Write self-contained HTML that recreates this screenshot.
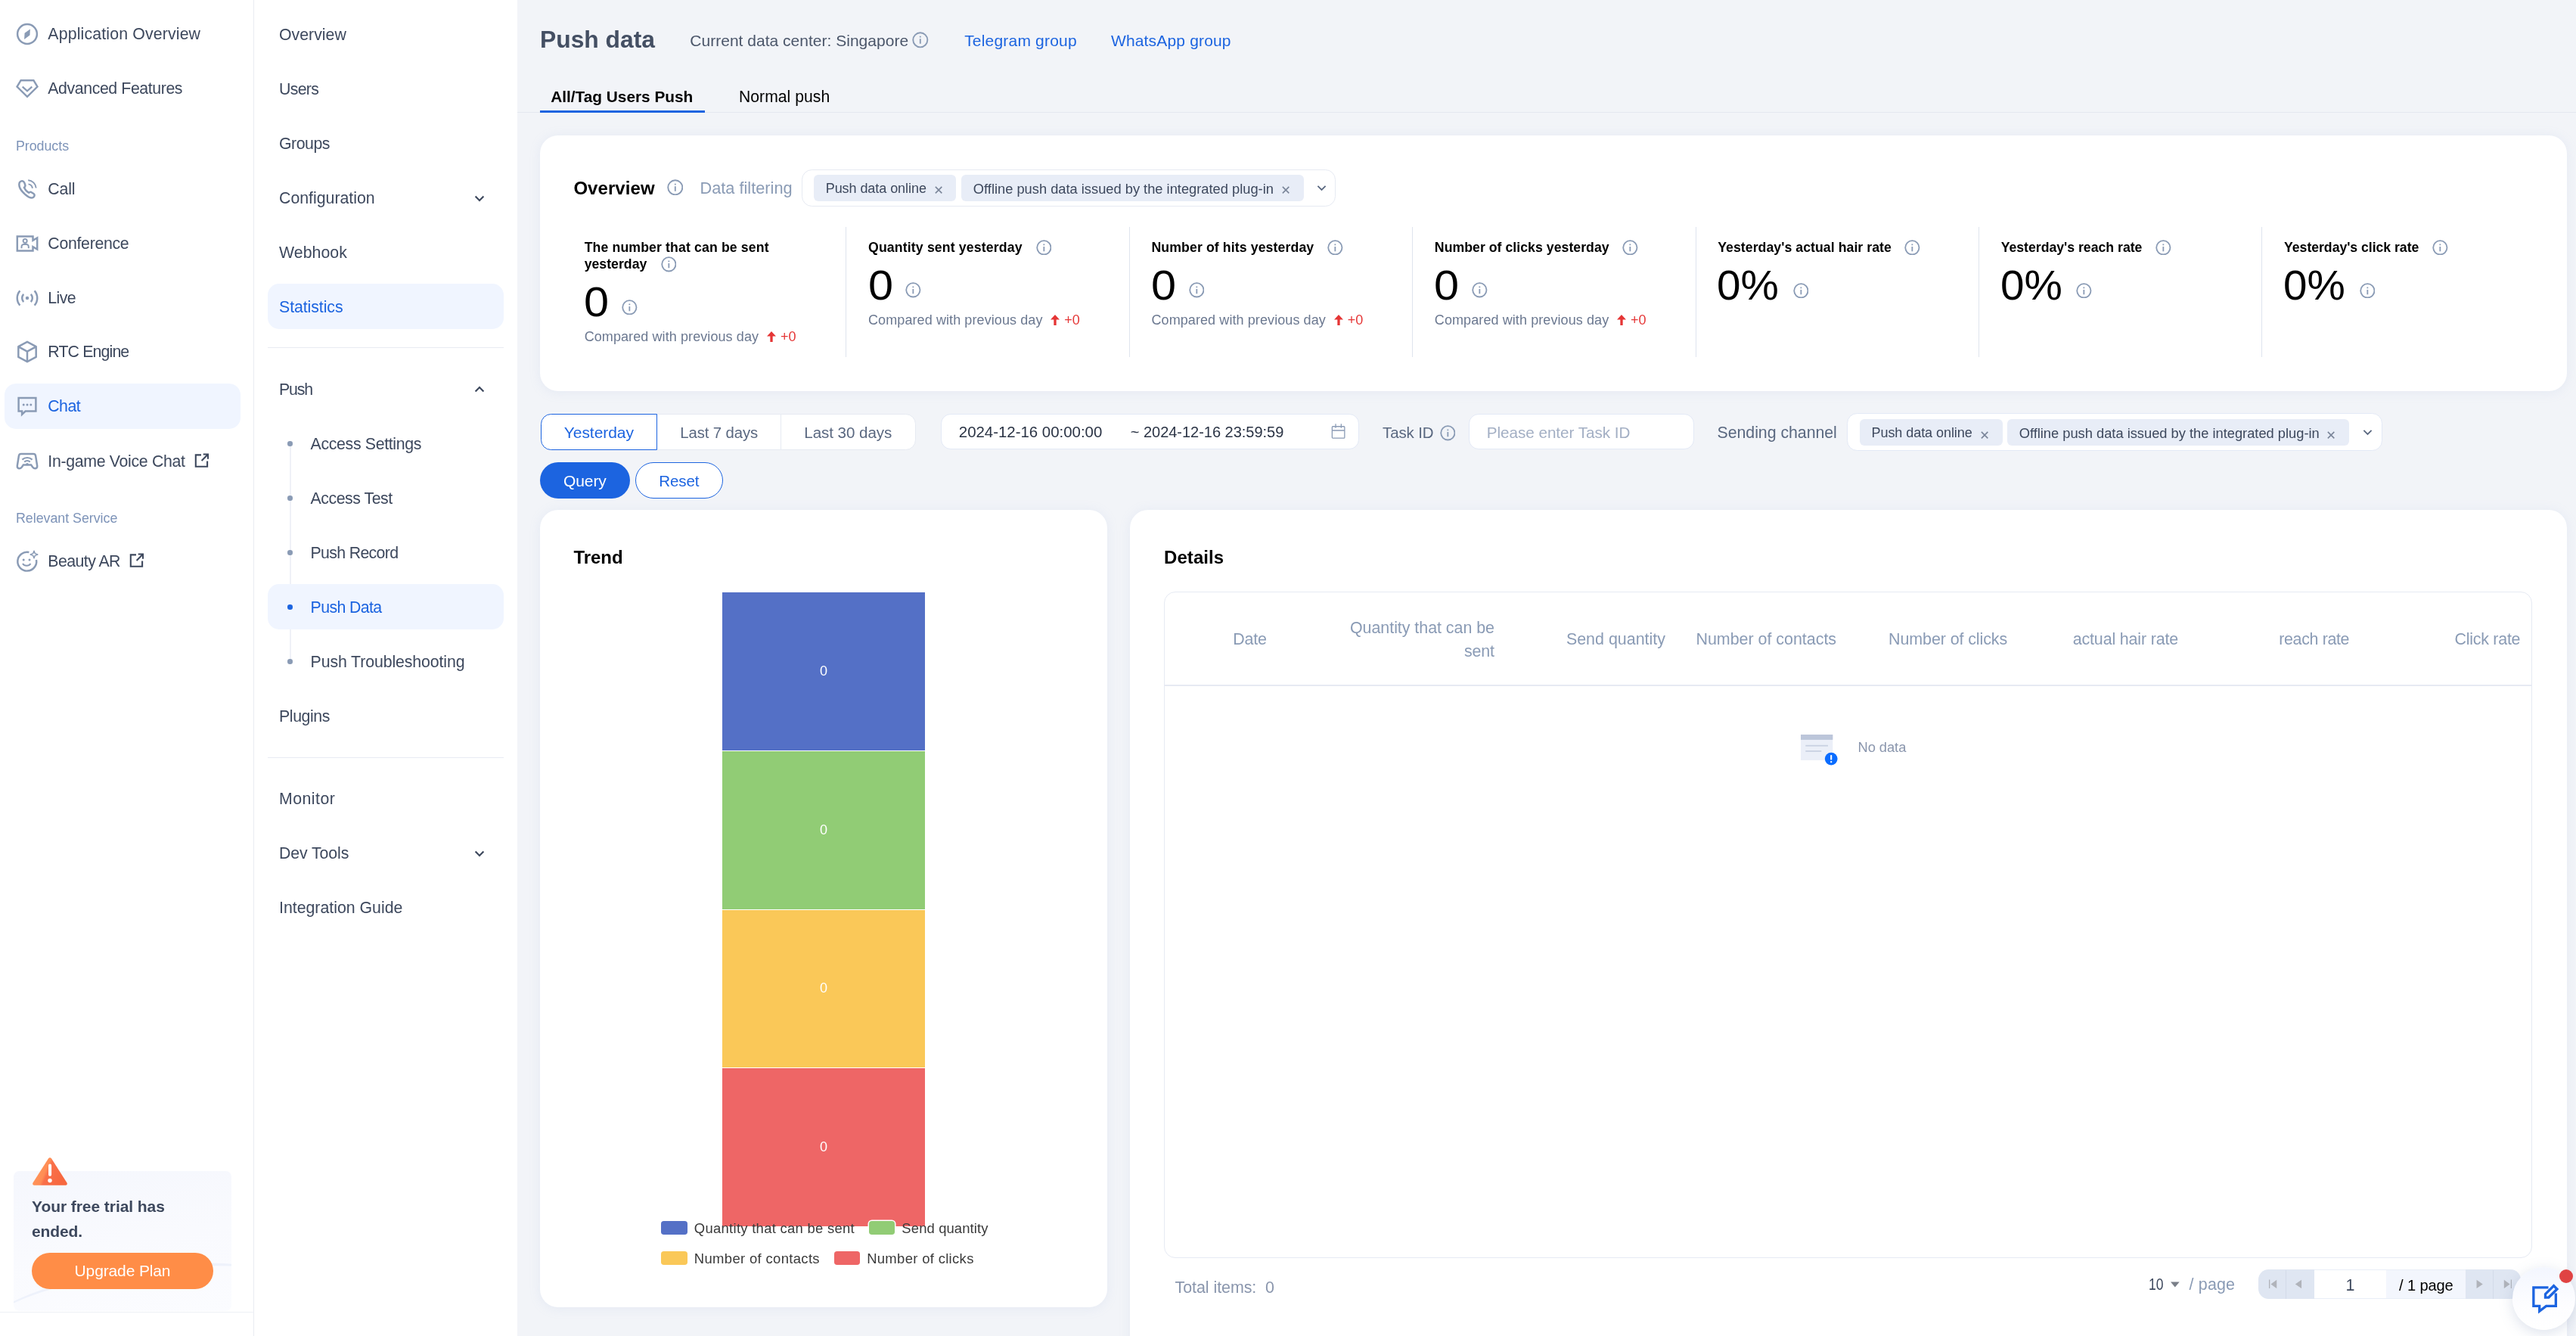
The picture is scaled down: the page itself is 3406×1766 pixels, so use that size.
<!DOCTYPE html>
<html>
<head>
<meta charset="utf-8">
<title>Push data</title>
<style>
*{box-sizing:border-box;margin:0;padding:0}
html,body{width:3406px;height:1766px;overflow:hidden;background:#f2f4f8}
body{font-family:"Liberation Sans",sans-serif;color:#3d485d}
#root{will-change:transform;position:absolute;left:0;top:0;width:2270.67px;height:1177.34px;zoom:1.5;overflow:hidden;background:#f2f4f8;font-size:14px}
.abs{position:absolute}
svg{display:block}
/* sidebar 1 */
#sb1{position:absolute;left:0;top:0;width:224px;height:1177.34px;background:#fff;border-right:1px solid #e9ecf2}
.it{position:absolute;left:4px;width:208px;height:40px;border-radius:10px;line-height:41.2px;padding-left:38.2px;font-size:14.2px;color:#3d485d;white-space:nowrap}
.it svg.ic{position:absolute;left:10px;top:10px;width:20px;height:20px;fill:none;stroke:#8a9bb5;stroke-width:1.65}
.it.on{background:#f0f5ff;color:#1c64e0}
.lab{position:absolute;left:14px;font-size:11.9px;color:#7d93b8;line-height:16px;white-space:nowrap}
.ext{display:inline-block;vertical-align:-1.5px;margin-left:8px;width:13px;height:13px;fill:none;stroke:#3d485d;stroke-width:1.4}
/* sidebar 2 */
#sb2{position:absolute;left:224px;top:0;width:232px;height:1177.34px;background:#fff}
.m{position:absolute;left:12px;width:208px;height:40px;border-radius:10px;line-height:42px;padding-left:10px;font-size:14.2px;color:#3d485d;white-space:nowrap}
.m.on{background:#f0f5ff;color:#1c64e0}
.m.sub{padding-left:37.7px}
.m.sub:before{content:"";position:absolute;left:17.6px;top:18px;width:4.4px;height:4.4px;border-radius:50%;background:#8a9bb5}
.m.sub.on:before{background:#1c64e0}
.m svg.chev{position:absolute;left:180.8px;top:14.5px;width:12px;height:12px;fill:none;stroke:#3d485d;stroke-width:1.45}
.hr{position:absolute;left:12px;width:208px;height:.7px;background:#e8ebf2}
</style>
</head>
<body>
<div id="root">

<!-- ============ SIDEBAR 1 ============ -->
<div id="sb1">
  <div class="it" style="top:10px"><svg class="ic" viewBox="0 0 20 20"><circle cx="10" cy="10" r="8.6"/><path d="M12.6 5.6 L12.3 11 L7.4 14.6 L7.7 9.2 Z" fill="#8a9bb5" stroke="none"/></svg><span style="letter-spacing:0.10px">Application Overview</span></div>
  <div class="it" style="top:58px"><svg class="ic" viewBox="0 0 20 20"><path d="M4.4 2.8 H15.6 L19 8.4 L10 17.2 L1 8.4 Z"/><path d="M5.8 8.4 L10 12.2 L14.2 8.4" stroke-width="1.5"/></svg><span style="letter-spacing:-0.27px">Advanced Features</span></div>
  <div class="lab" style="top:120.5px"><span style="letter-spacing:-0.03px">Products</span></div>
  <div class="it" style="top:146.4px"><svg class="ic" viewBox="0 0 20 20"><path d="M3.2 4.2 C4.6 2.2 6.8 2.6 7.6 4.6 L8.2 6.4 C8.5 7.4 8.1 8 7.3 8.6 C8 10.4 9.4 12 11.4 13.2 C12.2 12.4 13 12.2 13.8 12.8 L15.6 14 C16.8 14.8 16.6 16.2 15.4 17.2 C13.8 18.4 11.4 17.4 8.8 15.2 C5 12 2 7.6 3.2 4.2 Z"/><path d="M11 5.6 A4.2 4.2 0 0 1 14.6 9.2" stroke-width="1.3"/><path d="M10.8 2.2 A7.4 7.4 0 0 1 17.8 9" stroke-width="1.3"/></svg><span style="letter-spacing:-0.11px">Call</span></div>
  <div class="it" style="top:194.4px"><svg class="ic" viewBox="0 0 20 20"><path d="M1.2 3.6 H15 V7.2 L18.8 5 V15 L15 12.8 V16.4 H1.2 Z"/><circle cx="8.1" cy="7.6" r="1.7" stroke-width="1.3"/><path d="M5 14.2 V12.6 C5 11.4 6 10.6 7 10.6 H9.2 C10.2 10.6 11.2 11.4 11.2 12.6 V14.2" stroke-width="1.3"/></svg><span style="letter-spacing:-0.20px">Conference</span></div>
  <div class="it" style="top:242.4px"><svg class="ic" viewBox="0 0 20 20"><circle cx="10" cy="10" r="1.5" fill="#8a9bb5" stroke="none"/><path d="M6.8 6.6 A5 5 0 0 0 6.8 13.4 M13.2 6.6 A5 5 0 0 1 13.2 13.4 M3.6 3.6 A9.6 9.6 0 0 0 3.6 16.4 M16.4 3.6 A9.6 9.6 0 0 1 16.4 16.4"/></svg><span style="letter-spacing:-0.40px">Live</span></div>
  <div class="it" style="top:290px"><svg class="ic" viewBox="0 0 20 20"><path d="M10 1.2 L17.8 5.4 V14.6 L10 18.8 L2.2 14.6 V5.4 Z M2.4 5.6 L10 9.8 L17.6 5.6 M10 9.8 V18.6" stroke-linejoin="round"/></svg><span style="letter-spacing:-0.57px">RTC Engine</span></div>
  <div class="it on" style="top:337.9px"><svg class="ic" viewBox="0 0 20 20"><path d="M2.4 2.6 H17.6 V14.4 H8.4 L5.4 17.2 V14.4 H2.4 Z"/><circle cx="6.8" cy="8.6" r="1" fill="#8a9bb5" stroke="none"/><circle cx="10" cy="8.6" r="1" fill="#8a9bb5" stroke="none"/><circle cx="13.2" cy="8.6" r="1" fill="#8a9bb5" stroke="none"/></svg><span style="letter-spacing:-0.37px">Chat</span></div>
  <div class="it" style="top:386.4px"><svg class="ic" viewBox="0 0 20 20"><path d="M4.6 3.4 H15.4 C16.6 3.4 17.2 4 17.4 5 L18.8 13.8 C19 15.4 18 16.2 17 16.2 C16 16.2 15.4 15.8 14.8 15 L13.4 13 H6.6 L5.2 15 C4.6 15.8 4 16.2 3 16.2 C2 16.2 1 15.4 1.2 13.8 L2.6 5 C2.8 4 3.4 3.4 4.6 3.4 Z"/><path d="M5.6 8.4 A6.4 6.4 0 0 1 14.4 8.4 M7.5 10.4 A3.8 3.8 0 0 1 12.5 10.4" stroke-width="1.45"/><circle cx="10" cy="12.4" r="1.15" fill="#8a9bb5" stroke="none"/></svg><span style="letter-spacing:-0.21px">In-game Voice Chat</span><svg class="ext" viewBox="0 0 13 13"><path d="M6 1.6 H1.2 V11.8 H11.4 V7 M7.8 1 H12 V5.2 M12 1 L6.4 6.6"/></svg></div>
  <div class="lab" style="top:448.8px"><span style="letter-spacing:-0.02px">Relevant Service</span></div>
  <div class="it" style="top:474.4px"><svg class="ic" viewBox="0 0 20 20"><path d="M11.6 2 A8.3 8.3 0 1 0 18 8.6"/><circle cx="6.8" cy="8.6" r="1" fill="#8a9bb5" stroke="none"/><circle cx="12" cy="8.6" r="1" fill="#8a9bb5" stroke="none"/><path d="M6 12 C7.6 14.4 11.4 14.4 13 12" stroke-width="1.4"/><path d="M16 0.8 L16.9 3.1 L19.2 4 L16.9 4.9 L16 7.2 L15.1 4.9 L12.8 4 L15.1 3.1 Z" stroke-width="1" stroke-linejoin="round"/></svg><span style="letter-spacing:-0.37px">Beauty AR</span><svg class="ext" viewBox="0 0 13 13"><path d="M6 1.6 H1.2 V11.8 H11.4 V7 M7.8 1 H12 V5.2 M12 1 L6.4 6.6"/></svg></div>

  <!-- trial card -->
  <div class="abs" style="left:12px;top:1032px;width:192px;height:123.4px;border-radius:5px;background:linear-gradient(170deg,#f5f7fd 0%,#f9fafe 50%,#fbfcff 100%);overflow:hidden">
    <div class="abs" style="left:-20px;top:86px;width:260px;height:60px;border-top:3px solid #eef2fb;border-radius:50%;transform:rotate(-8deg)"></div>
  </div>
  <svg class="abs" style="left:28px;top:1019.6px;width:32px;height:26px" viewBox="0 0 32 26"><defs><linearGradient id="wg" x1="0" y1="0" x2="1" y2=".35"><stop offset="0" stop-color="#ff9c5e"/><stop offset=".48" stop-color="#ff8d55"/><stop offset=".56" stop-color="#f9704a"/><stop offset="1" stop-color="#f7683f"/></linearGradient></defs><path d="M14.6 1.6 C15.3 0.5 16.7 0.5 17.4 1.6 L31 23 C31.6 24 31 25.2 29.8 25.2 H2.2 C1 25.2 0.4 24 1 23 Z" fill="url(#wg)"/><rect x="14.7" y="6.4" width="2.7" height="10.8" rx="1.35" fill="#fff"/><circle cx="16" cy="21" r="1.8" fill="#fff"/></svg>
  <div class="abs" style="left:28px;top:1052.6px;font-size:14px;font-weight:700;line-height:21.8px;color:#3d485d;white-space:nowrap"><span style="letter-spacing:-0.04px">Your free trial has</span><br><span style="letter-spacing:-0.08px">ended.</span></div>
  <div class="abs" style="left:28px;top:1104px;width:160px;height:32px;border-radius:16px;background:#ff8d47;color:#fff;font-size:14px;line-height:32px;text-align:center"><span style="letter-spacing:-0.09px">Upgrade Plan</span></div>
  <div class="abs" style="left:0;top:1155.8px;width:224px;height:1px;background:#edf0f5"></div>
</div>

<!-- ============ SIDEBAR 2 ============ -->
<div id="sb2">
  <div class="m" style="top:10px"><span style="letter-spacing:0.01px">Overview</span></div>
  <div class="m" style="top:58px"><span style="letter-spacing:-0.46px">Users</span></div>
  <div class="m" style="top:106px"><span style="letter-spacing:-0.32px">Groups</span></div>
  <div class="m" style="top:154px"><span style="letter-spacing:-0.00px">Configuration</span><svg class="chev" viewBox="0 0 12 12"><path d="M2.4 4.4 L6 8 L9.6 4.4"/></svg></div>
  <div class="m" style="top:202px"><span style="letter-spacing:0.03px">Webhook</span></div>
  <div class="m on" style="top:250px"><span style="letter-spacing:-0.05px">Statistics</span></div>
  <div class="hr" style="top:306.2px"></div>
  <div class="m" style="top:322.7px"><span style="letter-spacing:-0.74px">Push</span><svg class="chev" viewBox="0 0 12 12"><path d="M2.4 7.6 L6 4 L9.6 7.6"/></svg></div>
  <div class="abs" style="left:31.4px;top:391px;width:1px;height:192px;background:#eff1f7"></div>
  <div class="m sub" style="top:370.9px"><span style="letter-spacing:-0.22px">Access Settings</span></div>
  <div class="m sub" style="top:418.8px"><span style="letter-spacing:-0.31px">Access Test</span></div>
  <div class="m sub" style="top:466.7px"><span style="letter-spacing:-0.44px">Push Record</span></div>
  <div class="m sub on" style="top:514.7px"><span style="letter-spacing:-0.40px">Push Data</span></div>
  <div class="m sub" style="top:562.7px"><span style="letter-spacing:-0.07px">Push Troubleshooting</span></div>
  <div class="m" style="top:610.7px"><span style="letter-spacing:-0.27px">Plugins</span></div>
  <div class="hr" style="top:667px"></div>
  <div class="m" style="top:683.5px"><span style="letter-spacing:0.32px">Monitor</span></div>
  <div class="m" style="top:731.5px"><span style="letter-spacing:-0.06px">Dev Tools</span><svg class="chev" viewBox="0 0 12 12"><path d="M2.4 4.4 L6 8 L9.6 4.4"/></svg></div>
  <div class="m" style="top:779.4px"><span style="letter-spacing:0.00px">Integration Guide</span></div>
</div>

<!-- ============ MAIN ============ -->
<div id="main">
<style>
#main{position:absolute;left:0;top:0;width:2270.67px;height:1177.34px;pointer-events:none}
.t{position:absolute;white-space:nowrap;line-height:20px}
.link{color:#1c64e0}
.info{position:absolute;width:12px;height:12px;fill:none;stroke:#8a9bb5;stroke-width:1.05;margin:-.6px 0 0 -.6px}
.card{position:absolute;background:#fff;border-radius:16px;box-shadow:0 1px 10px rgba(150,170,215,.13)}
.tag{position:absolute;height:23px;border-radius:4px;background:#e8edf7;font-size:12px;line-height:25px;color:#3d485d;padding-left:10.6px;white-space:nowrap}
.tag.r2 svg{top:10.7px}
.tag svg{position:absolute;right:12.4px;top:9.7px;width:6.8px;height:6.8px;stroke:#7a8599;stroke-width:1.1;fill:none}
.sel{position:absolute;height:32px;border-radius:9px;background:#fff;border:1px solid #e6eaf2}
.st{position:absolute;top:200px;width:249.6px;height:114.5px;border-left:1px solid #dfe4ee}
.st.first{border-left:none}
.st .h{position:absolute;left:19.1px;top:10.4px;font-size:11.8px;font-weight:700;line-height:15px;color:#000;white-space:nowrap}
.st .n{position:absolute;left:18.6px;font-size:37px;line-height:40px;color:#000;white-space:nowrap;transform-origin:0 50%}
.st .n.z{transform:scaleX(1.07);left:18.8px}
.st .n.p{transform:scaleX(1.02)}
.st .c{position:absolute;left:19.1px;font-size:12px;line-height:16px;color:#6b7890;white-space:nowrap}
.st .c b{font-weight:400;color:#e53535;margin-left:4px;font-size:12px}
</style>
<div class="t" style="left:476px;top:20.5px;font-size:21.2px;font-weight:700;color:#444f63;line-height:28px"><span style="letter-spacing:0.00px">Push data</span></div>
<div class="t" style="left:608.2px;top:26px;font-size:14px;color:#4b566a"><span style="letter-spacing:0.01px">Current data center: Singapore</span></div>
<svg class="info" style="left:804.8px;top:28.9px;width:14.4px;height:14.4px" viewBox="0 0 12 12"><circle cx="6" cy="6" r="5.3"/><path d="M6 5.2 V8.8 M6 3.2 V4.2"/></svg>
<div class="t link" style="left:850.1px;top:26px;font-size:14px"><span style="letter-spacing:0.13px">Telegram group</span></div>
<div class="t link" style="left:979.3px;top:26px;font-size:14px"><span style="letter-spacing:0.11px">WhatsApp group</span></div>
<!-- tabs -->
<div class="abs" style="left:456px;top:98.6px;width:1815px;height:1px;background:#e4e8f0"></div>
<div class="t" style="left:485.5px;top:75.1px;font-size:13.9px;font-weight:700;color:#000"><span style="letter-spacing:-0.01px">All/Tag Users Push</span></div>
<div class="abs" style="left:476px;top:97px;width:145.3px;height:2.5px;background:#1c64e0"></div>
<div class="t" style="left:651.3px;top:75.1px;font-size:14.1px;color:#000"><span style="letter-spacing:0.03px">Normal push</span></div>

<!-- overview card -->
<div class="card" style="left:476px;top:119.4px;width:1786.7px;height:225px"></div>
<div class="t" style="left:505.6px;top:155.9px;font-size:16px;font-weight:700;color:#000"><span style="letter-spacing:0.04px">Overview</span></div>
<svg class="info" style="left:588.5px;top:158.5px;width:14.4px;height:14.4px" viewBox="0 0 12 12"><circle cx="6" cy="6" r="5.3"/><path d="M6 5.2 V8.8 M6 3.2 V4.2"/></svg>
<div class="t" style="left:617px;top:156.1px;font-size:14.5px;color:#8a9bb5"><span style="letter-spacing:-0.00px">Data filtering</span></div>
<div class="sel" style="left:706.7px;top:149.5px;width:470.6px;height:32.6px"></div>
<div class="tag" style="left:717.2px;top:154.2px;width:125.8px"><span style="letter-spacing:-0.04px">Push data online</span><svg viewBox="0 0 7 7"><path d="M.6 .6 L6.4 6.4 M6.4 .6 L.6 6.4"/></svg></div>
<div class="tag" style="left:847.3px;top:154.2px;width:302px"><span style="font-size:12.2px"><span style="letter-spacing:0.00px">Offline push data issued by the integrated plug-in</span></span><svg viewBox="0 0 7 7"><path d="M.6 .6 L6.4 6.4 M6.4 .6 L.6 6.4"/></svg></div>
<svg class="abs" style="left:1160px;top:160.4px;width:10px;height:10px;fill:none;stroke:#5a6880;stroke-width:1.2" viewBox="0 0 10 10"><path d="M1.6 3.2 L5 6.6 L8.4 3.2"/></svg>

<!-- stats -->
<div class="st first" style="left:496px">
  <div class="h"><span style="letter-spacing:0.08px">The number that can be sent</span><br><span style="letter-spacing:0.01px">yesterday</span></div>
  <svg class="info" style="left:87.1px;top:26.5px;width:13.8px;height:13.8px" viewBox="0 0 12 12"><circle cx="6" cy="6" r="5.3"/><path d="M6 5.2 V8.8 M6 3.2 V4.2"/></svg>
  <div class="n z" style="top:46px">0</div>
  <svg class="info" style="left:52.8px;top:64.4px;width:13.8px;height:13.8px" viewBox="0 0 12 12"><circle cx="6" cy="6" r="5.3"/><path d="M6 5.2 V8.8 M6 3.2 V4.2"/></svg>
  <div class="c" style="top:88.4px"><span style="letter-spacing:0.06px">Compared with previous day</span><svg viewBox="0 0 8 9.6" style="display:inline-block;width:8px;height:9.6px;margin-left:7.2px;vertical-align:-1.2px"><path d="M4 0 L8 4.4 H5.1 V9.6 H2.9 V4.4 H0 Z" fill="#e53535"/></svg><b>+0</b></div>
</div>
<div class="st" style="left:745.6px">
  <div class="h"><span style="letter-spacing:0.09px">Quantity sent yesterday</span></div>
  <svg class="info" style="left:167.4px;top:11.7px;width:13.8px;height:13.8px" viewBox="0 0 12 12"><circle cx="6" cy="6" r="5.3"/><path d="M6 5.2 V8.8 M6 3.2 V4.2"/></svg>
  <div class="n z" style="top:31.6px">0</div>
  <svg class="info" style="left:52.6px;top:49.4px;width:13.8px;height:13.8px" viewBox="0 0 12 12"><circle cx="6" cy="6" r="5.3"/><path d="M6 5.2 V8.8 M6 3.2 V4.2"/></svg>
  <div class="c" style="top:73.8px"><span style="letter-spacing:0.06px">Compared with previous day</span><svg viewBox="0 0 8 9.6" style="display:inline-block;width:8px;height:9.6px;margin-left:7.2px;vertical-align:-1.2px"><path d="M4 0 L8 4.4 H5.1 V9.6 H2.9 V4.4 H0 Z" fill="#e53535"/></svg><b>+0</b></div>
</div>
<div class="st" style="left:995.2px">
  <div class="h"><span style="letter-spacing:0.07px">Number of hits yesterday</span></div>
  <svg class="info" style="left:175px;top:11.7px;width:13.8px;height:13.8px" viewBox="0 0 12 12"><circle cx="6" cy="6" r="5.3"/><path d="M6 5.2 V8.8 M6 3.2 V4.2"/></svg>
  <div class="n z" style="top:31.6px">0</div>
  <svg class="info" style="left:52.6px;top:49.4px;width:13.8px;height:13.8px" viewBox="0 0 12 12"><circle cx="6" cy="6" r="5.3"/><path d="M6 5.2 V8.8 M6 3.2 V4.2"/></svg>
  <div class="c" style="top:73.8px"><span style="letter-spacing:0.06px">Compared with previous day</span><svg viewBox="0 0 8 9.6" style="display:inline-block;width:8px;height:9.6px;margin-left:7.2px;vertical-align:-1.2px"><path d="M4 0 L8 4.4 H5.1 V9.6 H2.9 V4.4 H0 Z" fill="#e53535"/></svg><b>+0</b></div>
</div>
<div class="st" style="left:1244.8px">
  <div class="h"><span style="letter-spacing:0.02px">Number of clicks yesterday</span></div>
  <svg class="info" style="left:185.3px;top:11.7px;width:13.8px;height:13.8px" viewBox="0 0 12 12"><circle cx="6" cy="6" r="5.3"/><path d="M6 5.2 V8.8 M6 3.2 V4.2"/></svg>
  <div class="n z" style="top:31.6px">0</div>
  <svg class="info" style="left:52.6px;top:49.4px;width:13.8px;height:13.8px" viewBox="0 0 12 12"><circle cx="6" cy="6" r="5.3"/><path d="M6 5.2 V8.8 M6 3.2 V4.2"/></svg>
  <div class="c" style="top:73.8px"><span style="letter-spacing:0.06px">Compared with previous day</span><svg viewBox="0 0 8 9.6" style="display:inline-block;width:8px;height:9.6px;margin-left:7.2px;vertical-align:-1.2px"><path d="M4 0 L8 4.4 H5.1 V9.6 H2.9 V4.4 H0 Z" fill="#e53535"/></svg><b>+0</b></div>
</div>
<div class="st" style="left:1494.4px">
  <div class="h"><span style="letter-spacing:0.03px">Yesterday's actual hair rate</span></div>
  <svg class="info" style="left:184.5px;top:11.7px;width:13.8px;height:13.8px" viewBox="0 0 12 12"><circle cx="6" cy="6" r="5.3"/><path d="M6 5.2 V8.8 M6 3.2 V4.2"/></svg>
  <div class="n p" style="top:31.6px">0%</div>
  <svg class="info" style="left:86px;top:49.6px;width:13.8px;height:13.8px" viewBox="0 0 12 12"><circle cx="6" cy="6" r="5.3"/><path d="M6 5.2 V8.8 M6 3.2 V4.2"/></svg>
</div>
<div class="st" style="left:1744px">
  <div class="h"><span style="letter-spacing:-0.01px">Yesterday's reach rate</span></div>
  <svg class="info" style="left:156.1px;top:11.7px;width:13.8px;height:13.8px" viewBox="0 0 12 12"><circle cx="6" cy="6" r="5.3"/><path d="M6 5.2 V8.8 M6 3.2 V4.2"/></svg>
  <div class="n p" style="top:31.6px">0%</div>
  <svg class="info" style="left:86px;top:49.6px;width:13.8px;height:13.8px" viewBox="0 0 12 12"><circle cx="6" cy="6" r="5.3"/><path d="M6 5.2 V8.8 M6 3.2 V4.2"/></svg>
</div>
<div class="st" style="left:1993.6px">
  <div class="h"><span style="letter-spacing:-0.03px">Yesterday's click rate</span></div>
  <svg class="info" style="left:150.3px;top:11.7px;width:13.8px;height:13.8px" viewBox="0 0 12 12"><circle cx="6" cy="6" r="5.3"/><path d="M6 5.2 V8.8 M6 3.2 V4.2"/></svg>
  <div class="n p" style="top:31.6px">0%</div>
  <svg class="info" style="left:86px;top:49.6px;width:13.8px;height:13.8px" viewBox="0 0 12 12"><circle cx="6" cy="6" r="5.3"/><path d="M6 5.2 V8.8 M6 3.2 V4.2"/></svg>
</div>
<style>
.seg{position:absolute;top:364.7px;height:31.9px;line-height:32.2px;text-align:center;font-size:14px;color:#5a6880;background:#fff;border:1px solid #e6eaf2}
.inp{position:absolute;top:364.6px;height:31.4px;border-radius:8.6px;background:#fff;border:.8px solid #e3e9f6}
.th{position:absolute;font-size:14.3px;color:#8a9bb5;line-height:21px;margin-top:.5px;white-space:nowrap;text-align:right}
.pg{position:absolute;top:1118.6px;height:26px;background:#dfe6f2}
.lg{position:absolute;font-size:12.3px;line-height:14px;color:#3a3a3a;white-space:nowrap;letter-spacing:.18px}
.sw{position:absolute;width:23px;height:12px;border-radius:2.5px}
</style>
<!-- filter row -->
<div class="seg" style="left:579px;width:109.6px;border-left:none;border-right:none;font-size:13.55px"><span style="letter-spacing:-0.06px">Last 7 days</span></div>
<div class="seg" style="left:688px;width:119px;border-radius:0 9px 9px 0;font-size:13.7px"><span style="letter-spacing:-0.03px">Last 30 days</span></div>
<div class="seg" style="left:476.6px;width:102.6px;border-radius:9px 0 0 9px;border-color:#1c64e0;color:#1c64e0"><span style="letter-spacing:-0.03px">Yesterday</span></div>
<div class="inp" style="left:829px;width:369.2px"></div>
<div class="t" style="left:845.2px;top:370.6px;font-size:13.63px;color:#2b3445"><span style="letter-spacing:-0.01px">2024-12-16 00:00:00</span></div>
<div class="t" style="left:996.5px;top:370.6px;font-size:13.35px;color:#2b3445"><span style="letter-spacing:-0.02px">~ 2024-12-16 23:59:59</span></div>
<svg class="abs" style="left:1173.3px;top:373.2px;width:13px;height:13.4px;fill:none;stroke:#8a9bb5;stroke-width:.85" viewBox="0 0 13 13.4"><rect x=".9" y="2.5" width="11" height="10.2" rx=".6"/><path d="M.9 6 H11.9 M4 .2 V3.8 M8.9 .2 V3.8"/></svg>
<div class="t" style="left:1218.7px;top:371px;font-size:13.65px;color:#5a6880"><span style="letter-spacing:-0.08px">Task ID</span></div>
<svg class="info" style="left:1269.7px;top:375.2px;width:13.8px;height:13.8px" viewBox="0 0 12 12"><circle cx="6" cy="6" r="5.3"/><path d="M6 5.2 V8.8 M6 3.2 V4.2"/></svg>
<div class="inp" style="left:1294.5px;width:198.8px"></div>
<div class="t" style="left:1310.5px;top:371.4px;font-size:13.8px;color:#a3afc4"><span style="letter-spacing:-0.03px">Please enter Task ID</span></div>
<div class="t" style="left:1513.7px;top:371px;font-size:14.2px;color:#5a6880"><span style="letter-spacing:-0.02px">Sending channel</span></div>
<div class="sel" style="left:1628.2px;top:364.3px;width:471.6px;height:33px;border:.8px solid #e3e9f6"></div>
<div class="tag r2" style="left:1639.1px;top:369.4px;width:126.1px"><span style="letter-spacing:-0.04px">Push data online</span><svg viewBox="0 0 7 7"><path d="M.6 .6 L6.4 6.4 M6.4 .6 L.6 6.4"/></svg></div>
<div class="tag r2" style="left:1769.2px;top:369.4px;width:301.5px"><span style="font-size:12.2px"><span style="letter-spacing:0.00px">Offline push data issued by the integrated plug-in</span></span><svg viewBox="0 0 7 7"><path d="M.6 .6 L6.4 6.4 M6.4 .6 L.6 6.4"/></svg></div>
<svg class="abs" style="left:2081.7px;top:376px;width:10px;height:10px;fill:none;stroke:#5a6880;stroke-width:1.2" viewBox="0 0 10 10"><path d="M1.6 3.2 L5 6.6 L8.4 3.2"/></svg>
<div class="abs" style="left:476px;top:407.5px;width:79.2px;height:31.5px;border-radius:16px;background:#1c64e0;color:#fff;font-size:14px;line-height:33.6px;text-align:center"><span style="letter-spacing:-0.05px">Query</span></div>
<div class="abs" style="left:560.1px;top:407.5px;width:77px;height:31.5px;border-radius:16px;background:#fff;border:1px solid #1c64e0;color:#1c64e0;font-size:13.7px;line-height:32.2px;text-align:center"><span style="letter-spacing:-0.08px">Reset</span></div>

<!-- trend card -->
<div class="card" style="left:476px;top:449.4px;width:500px;height:702.3px"></div>
<div class="t" style="left:505.6px;top:481.5px;font-size:16px;font-weight:700;color:#000"><span style="letter-spacing:-0.03px">Trend</span></div>
<div class="abs" style="left:636.4px;top:521.7px;width:179.2px;height:139.6px;background:#5470c6"></div>
<div class="abs" style="left:636.4px;top:662px;width:179.2px;height:139px;background:#91cc75"></div>
<div class="abs" style="left:636.4px;top:801.7px;width:179.2px;height:139px;background:#fac858"></div>
<div class="abs" style="left:636.4px;top:941.4px;width:179.2px;height:139.3px;background:#ee6666"></div>
<div class="t" style="left:636.4px;width:179.2px;top:581.2px;text-align:center;font-size:12px;color:#fff">0</div>
<div class="t" style="left:636.4px;width:179.2px;top:721.2px;text-align:center;font-size:12px;color:#fff">0</div>
<div class="t" style="left:636.4px;width:179.2px;top:860.8px;text-align:center;font-size:12px;color:#fff">0</div>
<div class="t" style="left:636.4px;width:179.2px;top:1000.8px;text-align:center;font-size:12px;color:#fff">0</div>
<div class="sw" style="left:582.7px;top:1076.3px;background:#5470c6"></div>
<div class="lg" style="left:611.9px;top:1075.6px"><span style="letter-spacing:0.19px">Quantity that can be sent</span></div>
<div class="sw" style="left:765.8px;top:1076.3px;background:#91cc75;box-shadow:0 0 0 1px #fff"></div>
<div class="lg" style="left:794.9px;top:1075.6px"><span style="letter-spacing:0.08px">Send quantity</span></div>
<div class="sw" style="left:582.7px;top:1102.5px;background:#fac858"></div>
<div class="lg" style="left:611.9px;top:1101.8px"><span style="letter-spacing:0.23px">Number of contacts</span></div>
<div class="sw" style="left:735px;top:1102.5px;background:#ee6666"></div>
<div class="lg" style="left:764.1px;top:1101.8px"><span style="letter-spacing:0.22px">Number of clicks</span></div>

<!-- details card -->
<div class="card" style="left:996px;top:449.4px;width:1266.7px;height:760px"></div>
<div class="t" style="left:1026px;top:481.5px;font-size:16px;font-weight:700;color:#000"><span style="letter-spacing:0.05px">Details</span></div>
<div class="abs" style="left:1026.3px;top:521.5px;width:1205.8px;height:587.2px;border:1px solid #e6eaf3;border-radius:10px"></div>
<div class="abs" style="left:1026.3px;top:603.4px;width:1205.8px;height:1px;background:#e6eaf3"></div>
<div class="th" style="left:1026.3px;width:150.7px;top:553px;text-align:center"><span style="letter-spacing:-0.17px">Date</span></div>
<div class="th" style="left:1177px;width:140.3px;top:542.6px"><span style="letter-spacing:-0.03px">Quantity that can be</span><br><span style="letter-spacing:-0.09px">sent</span></div>
<div class="th" style="left:1327.7px;width:140.3px;top:553px"><span style="letter-spacing:0.00px">Send quantity</span></div>
<div class="th" style="left:1478.4px;width:140.3px;top:553px"><span style="letter-spacing:-0.01px">Number of contacts</span></div>
<div class="th" style="left:1629.1px;width:140.3px;top:553px"><span style="letter-spacing:-0.06px">Number of clicks</span></div>
<div class="th" style="left:1779.8px;width:140.3px;top:553px"><span style="letter-spacing:-0.10px">actual hair rate</span></div>
<div class="th" style="left:1930.5px;width:140.3px;top:553px"><span style="letter-spacing:-0.24px">reach rate</span></div>
<div class="th" style="left:2081.2px;width:140.3px;top:553px"><span style="letter-spacing:-0.18px">Click rate</span></div>
<!-- no data -->
<svg class="abs" style="left:1587px;top:647px;width:34px;height:28px" viewBox="0 0 34 28"><rect x="0" y="0" width="28.2" height="22.6" fill="#ebeff8"/><rect x="0" y="0" width="28.2" height="4.6" fill="#bcc6da"/><rect x="4.2" y="9.2" width="19.8" height="1.2" fill="#c9d1e2"/><rect x="4.2" y="14" width="14" height="1.2" fill="#c9d1e2"/><circle cx="26.8" cy="21.4" r="5.6" fill="#0a6cff"/><rect x="26.1" y="18" width="1.4" height="4.4" rx=".5" fill="#fff"/><rect x="26.1" y="23.4" width="1.4" height="1.4" rx=".5" fill="#fff"/></svg>
<div class="t" style="left:1637.7px;top:648.4px;font-size:12.2px;color:#8a96ad"><span style="letter-spacing:-0.03px">No data</span></div>
<!-- footer -->
<div class="t" style="left:1035.7px;top:1124.6px;font-size:14.3px;color:#8a96ad;white-space:pre"><span style="letter-spacing:-0.04px">Total items:  0</span></div>
<div class="t" style="left:1894px;top:1122px;font-size:14.8px;color:#3d485d;transform:scaleX(.79);transform-origin:0 50%">10</div>
<svg class="abs" style="left:1913.6px;top:1129px;width:7.8px;height:5.4px" viewBox="0 0 10 6"><path d="M0 0 H10 L5 6 Z" fill="#7a7f88"/></svg>
<div class="t" style="left:1929.7px;top:1122px;font-size:14.3px;color:#8a9bb5"><span style="letter-spacing:0.11px">/ page</span></div>
<div class="pg" style="left:1990.7px;width:231.3px;border-radius:9px"></div>
<div class="pg" style="left:2039.7px;width:63.8px;background:#fff;border-top:1px solid #e9eef7;border-bottom:1px solid #e9eef7"></div>
<div class="pg" style="left:2103.5px;width:70.1px;background:#f3f6fd;border-top:1px solid #e9eef7;border-bottom:1px solid #e9eef7"></div>
<div class="abs" style="left:2014.6px;top:1119px;width:.7px;height:25.6px;background:#d3dbe9"></div>
<div class="abs" style="left:2197.2px;top:1119px;width:.7px;height:25.6px;background:#d3dbe9"></div>
<svg class="abs" style="left:2000px;top:1127px;width:7.4px;height:8.6px" viewBox="0 0 8 9"><path d="M.4 .3 V8.7" stroke="#b0b3ba" stroke-width="1.1"/><path d="M7.4 .4 V8.6 L1.8 4.5 Z" fill="#b0b3ba"/></svg>
<svg class="abs" style="left:2022.8px;top:1127px;width:6.4px;height:8.6px" viewBox="0 0 7 9"><path d="M6.6 .4 V8.6 L.6 4.5 Z" fill="#b0b3ba"/></svg>
<svg class="abs" style="left:2182.9px;top:1127px;width:6.4px;height:8.6px" viewBox="0 0 7 9"><path d="M.4 .4 V8.6 L6.4 4.5 Z" fill="#b0b3ba"/></svg>
<svg class="abs" style="left:2206.6px;top:1127px;width:7.4px;height:8.6px" viewBox="0 0 8 9"><path d="M7.6 .3 V8.7" stroke="#b0b3ba" stroke-width="1.1"/><path d="M.6 .4 V8.6 L6.2 4.5 Z" fill="#b0b3ba"/></svg>
<div class="t" style="left:2039.7px;width:63.8px;top:1122.4px;text-align:center;font-size:14.3px;color:#3d485d">1</div>
<div class="t" style="left:2103.5px;width:70.1px;top:1122.4px;text-align:center;font-size:13.4px;color:#000"><span style="letter-spacing:-0.09px">/ 1 page</span></div>
<!-- float button -->
<div class="abs" style="left:2214.8px;top:1116.5px;width:55.4px;height:55.4px;border-radius:50%;background:linear-gradient(180deg,#f3f6fe 0%,#fdfdff 60%,#fff 100%);box-shadow:0 3px 12px rgba(120,140,180,.25)"></div>
<svg class="abs" style="left:2226.67px;top:1126.67px;width:33.33px;height:33.33px;fill:none;stroke:#1c64e0;stroke-width:3.3" viewBox="0 0 50 50"><path d="M29.5 11.85 H9.85 V36.35 H17.7 V43.2 L26.6 36.35 H39.35 V19.4"/><path d="M25.5 25.05 V20.7 L36.6 9.6 L41 14 L29.9 25.05 Z"/></svg>
<div class="abs" style="left:2256px;top:1118.7px;width:12px;height:12px;border-radius:50%;background:#e04343"></div>
</div>

</div>
</body>
</html>
